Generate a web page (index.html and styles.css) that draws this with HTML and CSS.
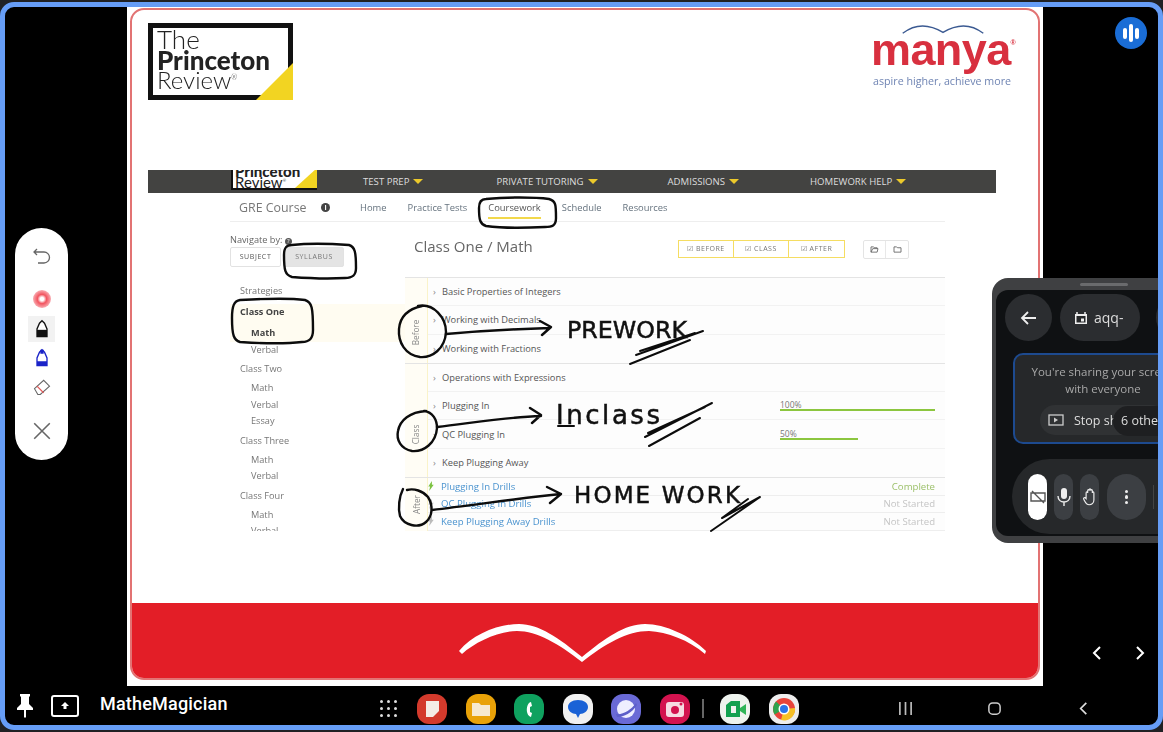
FILE: index.html
```html
<!DOCTYPE html>
<html lang="en">
<head>
  <meta charset="UTF-8">
  <title>MatheMagician</title>
  <link rel="stylesheet" href="styles.css">
</head>
<body>
  <div class="frame">
    <div class="main">
      <div class="slide">
        <div class="card">
          <div class="card-top">
            <div class="brand-row">
              <div class="tpr-logo">
                <span class="tpr-the">The</span>
                <b>Princeton</b>
                <span>Review<sup>®</sup></span>
              </div>
              <div class="manya-logo">
                <svg class="manya-wings" viewBox="0 0 96 14"><path d="M1 12C14 2 30 0 48 11C66 0 82 2 95 12" fill="none" stroke="#3b5a92" stroke-width="1.6"/></svg>
                <div class="manya-name">manya<sup>®</sup></div>
                <div class="manya-tag">aspire higher, achieve more</div>
              </div>
            </div>

            <div class="shot">
              <div class="topnav">
                <div class="mini-logo"><b>Princeton</b><span>Review<sup>®</sup></span></div>
                <a class="nav-a">TEST PREP</a>
                <a class="nav-b">PRIVATE TUTORING</a>
                <a class="nav-c">ADMISSIONS</a>
                <a class="nav-d">HOMEWORK HELP</a>
              </div>
              <div class="course">
                <div class="subnav">
                  <span class="course-name">GRE Course</span>
                  <span class="info">i</span>
                  <a>Home</a>
                  <a>Practice Tests</a>
                  <a class="current">Coursework</a>
                  <a>Schedule</a>
                  <a>Resources</a>
                </div>
                <div class="course-body">
                  <div class="side">
                    <div class="nav-by">Navigate by: <span class="help">?</span></div>
                    <div class="nav-btns">
                      <span class="btn-subject">SUBJECT</span>
                      <span class="btn-syllabus">SYLLABUS</span>
                    </div>
                    <ul class="syllabus">
                      <li class="head">Strategies</li>
                      <li class="head active">Class One</li>
                      <li class="sub active">Math</li>
                      <li class="sub">Verbal</li>
                      <li class="head">Class Two</li>
                      <li class="sub">Math</li>
                      <li class="sub">Verbal</li>
                      <li class="sub">Essay</li>
                      <li class="head">Class Three</li>
                      <li class="sub">Math</li>
                      <li class="sub">Verbal</li>
                      <li class="head">Class Four</li>
                      <li class="sub">Math</li>
                      <li class="sub">Verbal</li>
                    </ul>
                  </div>
                  <div class="content">
                    <div class="content-head">
                      <h2>Class One / Math</h2>
                      <div class="filters">
                        <span>☑ BEFORE</span>
                        <span>☑ CLASS</span>
                        <span>☑ AFTER</span>
                      </div>
                      <div class="folders">
                        <span><svg viewBox="0 0 10 8"><path d="M1 7V1h3l1 1h3v1M1 7h7l1-4H3z" fill="none" stroke="#666"/></svg></span>
                        <span><svg viewBox="0 0 10 8"><path d="M1 7V1h3l1 1h4v5z" fill="none" stroke="#666"/></svg></span>
                      </div>
                    </div>

                    <div class="section">
                      <div class="band band-before"><span>Before</span></div>
                      <div class="rows">
                        <div class="row"><i>›</i>Basic Properties of Integers</div>
                        <div class="row"><i>›</i>Working with Decimals</div>
                        <div class="row"><i>›</i>Working with Fractions</div>
                      </div>
                    </div>
                    <div class="section">
                      <div class="band band-class"><span>Class</span></div>
                      <div class="rows">
                        <div class="row"><i>›</i>Operations with Expressions</div>
                        <div class="row"><i>›</i>Plugging In
                          <div class="progress"><small>100%</small><div class="bar"><div class="fill" style="width:100%"></div></div></div>
                        </div>
                        <div class="row"><i>›</i>QC Plugging In
                          <div class="progress"><small>50%</small><div class="bar"><div class="fill" style="width:50%"></div></div></div>
                        </div>
                        <div class="row"><i>›</i>Keep Plugging Away</div>
                      </div>
                    </div>
                    <div class="section">
                      <div class="band"><span>After</span></div>
                      <div class="rows">
                        <div class="drill"><svg class="bolt" viewBox="0 0 6 11"><path d="M4 0L0 6h2L1 11l5-7H4z" fill="#7cc242"/></svg><a>Plugging In Drills</a><span class="status done">Complete</span></div>
                        <div class="drill"><svg class="bolt" viewBox="0 0 6 11"><path d="M4 0L0 6h2L1 11l5-7H4z" fill="#bbb"/></svg><a>QC Plugging In Drills</a><span class="status">Not Started</span></div>
                        <div class="drill"><svg class="bolt" viewBox="0 0 6 11"><path d="M4 0L0 6h2L1 11l5-7H4z" fill="#bbb"/></svg><a>Keep Plugging Away Drills</a><span class="status">Not Started</span></div>
                      </div>
                    </div>
                  </div>
                </div>
              </div>
            </div>
          </div>

          <div class="card-foot">
            <svg class="wings" viewBox="0 0 248 38"><path d="M0 27C14 10 40 0 60 0C80 0 100 14 123 33C146 14 166 0 186 0C206 0 232 12 247 27L246 30C230 16 208 8 190 7C168 7 146 20 123 38C100 20 78 7 58 7C40 7 16 18 3 30z" fill="#fff"/></svg>
          </div>
        </div>
      </div>

      <div class="gutter">
        <div class="voice-badge"><span></span><span class="tall"></span><span></span></div>
        <div class="pager">
          <svg viewBox="0 0 10 16"><path d="M8 2L2 8l6 6" fill="none" stroke="#fff" stroke-width="2"/></svg>
          <svg viewBox="0 0 10 16"><path d="M2 2l6 6-6 6" fill="none" stroke="#fff" stroke-width="2"/></svg>
        </div>
      </div>
    </div>

    <div class="taskbar">
      <svg class="pin" viewBox="0 0 16 24"><path d="M3 0h10v2l-1 1v7l4 4v2H9v7l-1 1-1-1v-7H0v-2l4-4V3L3 2z" fill="#fff"/></svg>
      <span class="share-icon"><svg viewBox="0 0 10 10"><path d="M5 1L1 5h2.500v3h3V5H9z" fill="#fff"/></svg></span>
      <span class="who">MatheMagician</span>

      <div class="dock">
        <div class="apps-grid"><i></i><i></i><i></i><i></i><i></i><i></i><i></i><i></i><i></i></div>
        <span class="app app-notes"><svg viewBox="0 0 30 30"><path d="M9 7h13v10l-6 6H9z" fill="#f4ede6"/></svg></span>
        <span class="app app-files"><svg viewBox="0 0 30 30"><path d="M6 9h7l2 2h9v11H6z" fill="#f6e9cf"/></svg></span>
        <span class="app app-phone"><svg viewBox="0 0 30 30"><path d="M17 8c-5 1-6 13 0 15l1-4-2-1v-5l2-1z" fill="#fff"/></svg></span>
        <span class="app app-msg"><svg viewBox="0 0 30 30"><path d="M15 6c6 0 10 3 10 7s-4 7-8 7l-2 4-2-4c-4 0-8-3-8-7s4-7 10-7z" fill="#1a62d6"/></svg></span>
        <span class="app app-net"><svg viewBox="0 0 30 30"><circle cx="15" cy="15" r="9" fill="#eef"/><path d="M5 20c7 1 15-4 20-11l1 2c-5 8-13 12-20 12z" fill="#5d5fc9"/></svg></span>
        <span class="app app-cam"><svg viewBox="0 0 30 30"><rect x="6" y="8" width="18" height="15" rx="3" fill="#f6dbe3"/><circle cx="15" cy="16" r="4" fill="#d3134f"/><circle cx="21" cy="10" r="1.500" fill="#d3134f"/></svg></span>
        <span class="dock-line"></span>
        <span class="app app-meet"><svg viewBox="0 0 30 30"><path d="M6 11l5-4h9v16H6z" fill="#12a150"/><path d="M20 14l6-4v11l-6-4z" fill="#2fb457"/><path d="M11 12h5v7h-5z" fill="#eef3ee"/></svg></span>
        <span class="app app-chrome"><svg viewBox="0 0 30 30"><circle cx="15" cy="15" r="11" fill="#e8443a"/><path d="M15 15L5.500 20.500A11 11 0 0 1 7 7.500z" fill="#2da44e"/><path d="M15 15l11-1a11 11 0 0 1-14 12z" fill="#f6c026"/><circle cx="15" cy="15" r="5.500" fill="#fff"/><circle cx="15" cy="15" r="4" fill="#2a74e8"/></svg></span>
      </div>

      <div class="android-nav">
        <svg viewBox="0 0 16 14"><path d="M2 0v14M8 0v14M14 0v14" stroke="#bbb" stroke-width="1.800"/></svg>
        <svg viewBox="0 0 16 16"><rect x="2" y="2" width="12" height="12" rx="4" fill="none" stroke="#ccc" stroke-width="1.600"/></svg>
        <svg viewBox="0 0 10 16"><path d="M8 2L2 8l6 6" fill="none" stroke="#ddd" stroke-width="1.800"/></svg>
      </div>
    </div>

    <!-- pen marks drawn on top of the slide, in page coordinates -->
    <svg class="ink" viewBox="5 7 1153 718">
      <g fill="none" stroke="#0c0c0c" stroke-width="2.400" stroke-linecap="round" stroke-linejoin="round">
        <path d="M486 199C505 197 535 197 549 199C556 201 556 205 556 218C556 226 552 227 545 227C525 228 500 228 486 226C480 224 479 220 479 208C479 202 481 199 486 199z"/>
        <path d="M292 245C310 243 335 244 349 245C355 247 356 252 356 268C356 276 352 278 345 278C328 279 305 278 292 277C285 275 284 270 284 255C284 248 286 245 292 245z"/>
        <path d="M240 300C258 299 290 298 305 300C312 302 313 308 313 330C313 339 309 342 302 342C285 344 255 343 240 342C234 340 232 336 232 318C232 306 234 301 240 300z"/>
        <path d="M418 306C434 303 446 318 446 332C445 349 432 358 420 357C405 355 398 342 399 329C400 316 408 309 422 306"/>
        <path d="M446 334C480 331 515 329 550 328M540 321L551 327L542 335"/>
        <path d="M424 411C433 412 437 420 437 428C436 443 424 452 412 451C401 449 396 440 398 431C400 420 410 412 426 411"/>
        <path d="M437 427C472 423 506 417 541 416M530 408L541 415L532 423"/>
        <path d="M403 489C399 497 398 508 400 516C404 525 418 529 426 522C433 516 433 505 428 497C423 491 414 488 407 490"/>
        <path d="M432 510C475 505 520 498 561 494M547 487L561 494L550 503"/>
        <path d="M636 355L703 331M630 364L690 340M640 351L695 333" stroke-width="2"/>
        <path d="M645 437L712 403M649 446L700 418M648 433L705 407" stroke-width="2"/>
        <path d="M711 531L760 497L722 518L748 499" stroke-width="2"/>
        <path d="M558 426H574" stroke-width="2"/>
      </g>
      <g class="hand">
        <text x="567" y="338" textLength="120" lengthAdjust="spacingAndGlyphs" font-size="23">PREWORK</text>
        <text x="556" y="424" textLength="104" lengthAdjust="spacing" font-size="26">Inclass</text>
        <text x="574" y="503" textLength="166" lengthAdjust="spacing" font-size="23">HOME WORK</text>
      </g>
    </svg>

    <!-- floating annotation tools -->
    <div class="tools">
      <svg class="tool" viewBox="0 0 20 20"><path d="M5 2L2 5l3 3M2 5h10a5 5 0 0 1 0 11H6" fill="none" stroke="#666" stroke-width="1.300"/></svg>
      <span class="laser"></span>
      <span class="tool-on">
        <svg class="tool" viewBox="0 0 20 24"><path d="M10 2l3 3 3 7v9H4v-9l3-7z" fill="#fff" stroke="#111" stroke-width="1.600"/><path d="M4 13h12v8H4z" fill="#111"/></svg>
      </span>
      <svg class="tool tool-blue" viewBox="0 0 20 24"><path d="M10 2l3 3 3 7v9H4v-9l3-7z" fill="#fff" stroke="#1a23c8" stroke-width="1.600"/><path d="M8 2h4v5H8zM4 16h12v5H4z" fill="#1a23c8"/></svg>
      <svg class="tool eraser" viewBox="0 0 24 24"><path d="M3 14L14 4l7 7-11 10H7z" fill="none" stroke="#666" stroke-width="1.300"/><path d="M6 11l8 8" stroke="#e25555" stroke-width="1.500"/></svg>
      <svg class="tool tool-close" viewBox="0 0 18 18"><path d="M2 2l14 14M16 2L2 16" stroke="#666" stroke-width="1.400"/></svg>
    </div>

    <!-- meeting panel, runs off the right edge -->
    <div class="meet-panel">
      <div class="meet-inner">
        <div class="meet-top">
          <span class="round-btn"><svg viewBox="0 0 18 18"><path d="M8 3L2 9l6 6M2 9h14" fill="none" stroke="#eee" stroke-width="1.800"/></svg></span>
          <span class="code-pill"><svg viewBox="0 0 14 14"><path d="M1 3h12v10H1z" fill="#eee"/><path d="M3 1v2M11 1v2" stroke="#eee" stroke-width="1.500"/><rect x="2.500" y="5" width="9" height="6.500" fill="#26282a"/><rect x="7" y="7.500" width="3" height="3" fill="#eee"/></svg>aqq-</span>
          <span class="round-btn"></span>
        </div>
        <div class="share-box">
          <p>You're sharing your screen<br>with everyone</p>
          <div class="stop-pill"><svg viewBox="0 0 16 12"><rect x="1" y="1" width="14" height="10" fill="none" stroke="#ccc" stroke-width="1.300"/><path d="M6 3.500L10 6 6 8.500z" fill="#ccc"/></svg>Stop sharing</div>
          <div class="others">6 others</div>
        </div>
        <div class="controls">
          <span class="ctl ctl-cam"><svg viewBox="0 0 16 16"><path d="M1 4h14v8H1zM2 2l12 12" fill="none" stroke="#555" stroke-width="1.400"/></svg></span>
          <span class="ctl"><svg viewBox="0 0 14 20"><rect x="4" y="1" width="6" height="11" rx="3" fill="#eee"/><path d="M1 9c0 8 12 8 12 0M7 15v4" fill="none" stroke="#eee" stroke-width="1.400"/></svg></span>
          <span class="ctl"><svg viewBox="0 0 18 22"><path d="M4 10V6c0-2 2-2 2 0V3c0-2 2-2 2 0v-1c0-2 2-2 2 0v1c0-2 2-2 2 0v3c0-2 2-2 2 0v9c0 4-3 6-6 6-4 0-5-3-7-7-1-2 1-3 3-1z" fill="none" stroke="#eee" stroke-width="1.500"/></svg></span>
          <span class="ctl ctl-menu"><i></i><i></i><i></i></span>
          <span class="ctl-line"></span>
        </div>
      </div>
    </div>
  </div>
</body>
</html>
```

FILE: styles.css
```css
/* General Reset */
* {
  margin: 0;
  padding: 0;
  box-sizing: border-box;
}

body {
  background-color: #202124;
  padding-top: 2px;
  height: 732px;
  overflow: hidden;
  font-family: 'Open Sans', 'Liberation Sans', sans-serif;
}

ul {
  list-style: none;
}

/* Blue presenter frame */
.frame {
  position: relative;
  width: 1163px;
  height: 728px;
  border: 5px solid #669df6;
  border-radius: 14px;
  background-color: #000;
  overflow: hidden;
  display: flex;
  flex-direction: column;
}

.main {
  display: flex;
  height: 679px;
}

/* Slide */
.slide {
  width: 916px;
  margin-left: 122px;
  background-color: #fff;
  padding: 1px 3px 6px;
}

.card {
  height: 672px;
  border: 2px solid #e27373;
  border-radius: 14px;
  overflow: hidden;
  display: flex;
  flex-direction: column;
}

.card-top {
  flex: 1;
  padding: 13px 0 0 16px;
}

.card-foot {
  height: 75px;
  background-color: #e31e27;
  display: flex;
  justify-content: center;
  padding-top: 21px;
}

.wings {
  width: 248px;
  height: 38px;
  margin-left: -4px;
}

.brand-row {
  display: flex;
  justify-content: space-between;
  height: 77px;
  padding-right: 21px;
  filter: blur(0.4px);
}

/* Princeton logo */
.tpr-logo {
  position: relative;
  width: 145px;
  height: 77px;
  border: 5px solid #111;
  padding: 1px 0 0 4px;
  color: #222;
  font-family: 'Lato', 'Liberation Sans', sans-serif;
  font-weight: 300;
  font-size: 24px;
  line-height: 20.5px;
  display: flex;
  flex-direction: column;
}

.tpr-logo::after {
  content: "";
  position: absolute;
  right: -5px;
  bottom: -5px;
  width: 37px;
  height: 37px;
  background-color: #f2d422;
  clip-path: polygon(100% 0, 100% 100%, 0 100%);
}

.tpr-the {
  font-size: 26px;
}

.tpr-logo b {
  font-weight: 900;
  font-size: 26px;
}

.tpr-logo sup {
  font-size: 7px;
  line-height: 0;
}

/* Manya logo */
.manya-logo {
  width: 144px;
  text-align: center;
}

.manya-wings {
  display: block;
  width: 96px;
  height: 12px;
  margin-left: 22px;
}

.manya-name {
  color: #d8303f;
  font-family: 'Liberation Sans', sans-serif;
  font-weight: 700;
  font-size: 45px;
  line-height: 30px;
  letter-spacing: -0.6px;
  white-space: nowrap;
  text-align: left;
  margin-left: -2px;
}

.manya-name sup {
  font-size: 7px;
  vertical-align: 20px;
  line-height: 0;
}

.manya-tag {
  color: #6f84b3;
  font-size: 10.7px;
  line-height: 14px;
  white-space: nowrap;
  margin-top: 9px;
  padding-right: 6px;
}

/* Embedded course screenshot */
.shot {
  width: 848px;
  margin-top: 70px;
  filter: blur(0.6px);
}

.topnav {
  position: relative;
  height: 23px;
  background-color: #434341;
  color: #ddd;
  font-size: 9.6px;
  display: flex;
  align-items: center;
  padding-left: 83px;
}

.topnav a {
  display: flex;
  align-items: center;
  white-space: nowrap;
}

.topnav a::after {
  content: "";
  margin-left: 4px;
  border-left: 5px solid transparent;
  border-right: 5px solid transparent;
  border-top: 5px solid #ecc92b;
}

.nav-a { margin-left: 46px; }
.nav-b { margin-left: 73px; }
.nav-c { margin-left: 70px; }
.nav-d { margin-left: 71px; }

.mini-logo {
  position: relative;
  align-self: flex-start;
  width: 86px;
  height: 20px;
  overflow: hidden;
  background-color: #fff;
  border-left: 2px solid #111;
  border-bottom: 2px solid #111;
  padding-left: 2px;
  color: #222;
  font-family: 'Lato', 'Liberation Sans', sans-serif;
  font-size: 15px;
  line-height: 11px;
  display: flex;
  flex-direction: column;
  justify-content: flex-end;
}

.mini-logo::after {
  content: "";
  position: absolute;
  right: 0;
  bottom: 0;
  width: 22px;
  height: 20px;
  background-color: #f2d422;
  clip-path: polygon(100% 0, 100% 100%, 0 100%);
}

.mini-logo b {
  font-weight: 900;
}

.mini-logo sup {
  font-size: 4px;
  line-height: 0;
}

.course {
  width: 715px;
  margin-left: 82px;
}

.subnav {
  height: 29px;
  border-bottom: 1px solid #eee;
  display: flex;
  align-items: center;
  padding-left: 9px;
  font-size: 9.4px;
  color: #66737f;
}

.subnav a {
  margin-right: 21px;
  white-space: nowrap;
}

.course-name {
  font-size: 12.4px;
  color: #777;
  white-space: nowrap;
  width: 81px;
}

.info {
  width: 9px;
  height: 9px;
  margin-left: 1px;
  margin-right: 30px;
  border-radius: 50%;
  background-color: #444;
  color: #fff;
  font-size: 7px;
  font-weight: 700;
  line-height: 9px;
  text-align: center;
}

.subnav .current {
  position: relative;
  color: #555;
}

.subnav .current::after {
  content: "";
  position: absolute;
  left: 0;
  right: 0;
  bottom: -5px;
  height: 2px;
  background-color: #f2d84b;
}

.course-body {
  display: flex;
  height: 309px;
  overflow: hidden;
}

/* Syllabus column */
.side {
  width: 175px;
  padding-top: 11px;
  color: #777;
  font-size: 9.2px;
}

.nav-by {
  height: 13px;
  line-height: 13px;
  color: #666;
}

.help {
  display: inline-block;
  width: 7px;
  height: 7px;
  border-radius: 50%;
  background-color: #555;
  color: #fff;
  font-size: 6px;
  line-height: 7px;
  text-align: center;
}

.nav-btns {
  display: flex;
  gap: 3px;
  margin-top: 1px;
  font-size: 7px;
  letter-spacing: 0.6px;
  color: #555;
}

.nav-btns span {
  height: 20px;
  line-height: 18px;
  text-align: center;
  border: 1px solid #e2e2e2;
  border-radius: 2px;
}

.btn-subject {
  width: 51px;
}

.btn-syllabus {
  width: 60px;
  background-color: #e4e4e4;
  color: #777;
}

.syllabus {
  margin-top: 15.5px;
}

.syllabus li {
  height: 16.5px;
  line-height: 16.5px;
  padding-left: 10px;
}

.syllabus .head {
  margin-top: 3px;
  margin-bottom: 2.5px;
}

.syllabus .sub {
  padding-left: 21px;
}

.syllabus .active {
  color: #444;
  font-weight: 700;
  background-color: #fffcf1;
}

.syllabus .head.active {
  margin-top: 5px;
  margin-bottom: 0;
  height: 21px;
}

/* Lesson column */
.content {
  width: 540px;
  font-size: 9.3px;
  color: #555;
}

.content-head {
  height: 56px;
  border-bottom: 1px solid #e4e4e4;
  display: flex;
  padding: 18px 36px 0 9px;
}

.content-head h2 {
  font-size: 15px;
  line-height: 15px;
  font-weight: 400;
  color: #666;
  white-space: nowrap;
  width: 266px;
  margin-top: -1px;
}

.filters {
  display: flex;
  height: 18px;
  border: 1px solid #f5dd62;
  font-size: 7px;
  letter-spacing: 0.5px;
  color: #777;
}

.filters span {
  width: 55px;
  line-height: 16px;
  text-align: center;
  white-space: nowrap;
  border-right: 1px solid #f5dd62;
}

.filters span:last-child {
  border-right: 0;
}

.folders {
  display: flex;
  margin-left: 18px;
  height: 19px;
  border: 1px solid #e4e4e4;
  border-radius: 2px;
}

.folders span {
  width: 22px;
  display: flex;
  align-items: center;
  justify-content: center;
  border-right: 1px solid #e8e8e8;
}

.folders span:last-child {
  border-right: 0;
}

.folders svg {
  width: 9px;
  height: 7px;
}

.section {
  display: flex;
  border-bottom: 1px solid #e4e4e4;
}

.band {
  width: 23px;
  background-color: #fffdf5;
  border-right: 1px solid #faf3c9;
  display: flex;
  align-items: center;
  justify-content: center;
  color: #888;
  font-size: 8.2px;
}

.band span {
  transform: rotate(-90deg);
  white-space: nowrap;
}

.band-before {
  padding-top: 24px;
}

.band-class {
  padding-top: 28px;
}

.rows {
  flex: 1;
  background-color: #fdfdfd;
}

.row {
  height: 28.3px;
  display: flex;
  align-items: center;
  padding: 0 10px 0 5px;
  border-bottom: 1px solid #f2f2f2;
  white-space: nowrap;
}

.rows .row:last-child {
  border-bottom: 0;
}

.row i {
  width: 9px;
  font-style: normal;
  color: #888;
}

.progress {
  margin-left: auto;
  width: 155px;
  color: #777;
}

.progress small {
  display: block;
  font-size: 8.5px;
  line-height: 9px;
}

.bar {
  height: 2px;
}

.fill {
  height: 100%;
  background-color: #8cc63f;
}

.drill {
  height: 17.5px;
  display: flex;
  align-items: center;
  padding: 0 10px 0 0;
  border-bottom: 1px solid #eee;
  white-space: nowrap;
  font-size: 9.6px;
}

.drill a {
  color: #4a93cf;
}

.bolt {
  width: 6px;
  height: 10px;
  margin: 0 7px 0 0;
}

.status {
  margin-left: auto;
  color: #c4c4c4;
}

.status.done {
  color: #9cc06a;
}

/* Right gutter */
.gutter {
  flex: 1;
  display: flex;
  flex-direction: column;
}

.voice-badge {
  align-self: flex-end;
  width: 32px;
  height: 32px;
  margin: 10px 11px 0 0;
  border-radius: 50%;
  background-color: #1a6dd6;
  display: flex;
  align-items: center;
  justify-content: center;
  gap: 2px;
}

.voice-badge span {
  width: 4px;
  height: 11px;
  border-radius: 2px;
  background-color: #fff;
}

.voice-badge .tall {
  height: 18px;
}

.pager {
  margin-top: auto;
  margin-bottom: 25px;
  padding-left: 49px;
  display: flex;
  gap: 33px;
}

.pager svg {
  width: 10px;
  height: 16px;
}

/* Bottom bar */
.taskbar {
  flex: 1;
  display: flex;
  align-items: center;
  padding-left: 12px;
  color: #fff;
}

.pin {
  width: 16px;
  height: 24px;
}

.share-icon {
  width: 28px;
  height: 22px;
  margin-left: 18px;
  border: 2px solid #fff;
  border-radius: 3px;
  display: flex;
  align-items: center;
  justify-content: center;
}

.share-icon svg {
  width: 10px;
  height: 10px;
}

.who {
  width: 128px;
  margin: 0 0 4px 21px;
  font-family: 'Roboto', 'Liberation Sans', sans-serif;
  font-weight: 500;
  font-size: 18px;
  letter-spacing: 0.2px;
  white-space: nowrap;
}

.dock {
  display: flex;
  align-items: center;
  margin: 6px 0 0 152px;
  filter: blur(0.5px);
}

.apps-grid {
  width: 17px;
  display: grid;
  grid-template-columns: repeat(3, 3px);
  gap: 4px;
  margin-right: 20px;
}

.apps-grid i {
  height: 3px;
  border-radius: 50%;
  background-color: #ddd;
}

.app {
  width: 30px;
  height: 30px;
  margin-right: 18.5px;
  border-radius: 12px;
  overflow: hidden;
}

.app svg {
  display: block;
  width: 30px;
  height: 30px;
}

.app-notes { background-color: #d33a2c; }
.app-files { background-color: #e9a208; }
.app-phone { background-color: #0fa15f; }
.app-msg { background-color: #f1f1f1; }
.app-net { background-color: #6a6ad6; }
.app-cam { background-color: #d3134f; }
.app-meet { background-color: #eef3ee; }
.app-chrome { background-color: #eee; }

.dock-line {
  width: 2px;
  height: 19px;
  margin: 0 16px 0 -6px;
  background-color: #666;
}

.android-nav {
  display: flex;
  align-items: center;
  margin: 6px 0 0 81px;
}

.android-nav svg {
  height: 15px;
  width: 15px;
}

.android-nav svg:nth-child(1) {
  margin-right: 74px;
}

.android-nav svg:nth-child(2) {
  margin-right: 74px;
}

/* Pen marks */
.ink {
  position: absolute;
  left: 0;
  top: 0;
  width: 1153px;
  height: 718px;
  pointer-events: none;
  filter: blur(0.3px);
}

.hand text {
  font-family: 'DejaVu Sans', sans-serif;
  fill: #111;
  stroke: #111;
  stroke-width: 0.5;
}

/* Annotation tools */
.tools {
  position: absolute;
  left: 10px;
  top: 221px;
  width: 53px;
  height: 232px;
  border-radius: 27px;
  background-color: #fff;
  display: flex;
  flex-direction: column;
  align-items: center;
  padding-top: 19px;
  filter: blur(0.3px);
}

.tool {
  display: block;
  width: 20px;
  height: 20px;
}

.laser {
  width: 18px;
  height: 18px;
  margin-top: 23px;
  border-radius: 50%;
  background: radial-gradient(circle, #fff 0 14%, #f2545f 36%, #f8a6ac 68%, #fff 100%);
}

.tool-on {
  width: 27px;
  height: 26px;
  margin-top: 8px;
  background-color: #f2f2f2;
  display: flex;
  align-items: center;
  justify-content: center;
}

.tool-blue {
  margin-top: 6px;
}

.eraser {
  margin-top: 9px;
}

.tool-close {
  margin-top: 24px;
}

/* Meeting panel */
.meet-panel {
  position: absolute;
  left: 987px;
  top: 271px;
  width: 220px;
  height: 265px;
  padding: 12px 0 7px 4px;
  border-radius: 16px;
  background-color: #3f4042;
  filter: blur(0.4px);
}

.meet-panel::before {
  content: "";
  position: absolute;
  left: 88px;
  top: 5px;
  width: 48px;
  height: 3px;
  border-radius: 2px;
  background-color: #6a6b6d;
}

.meet-inner {
  height: 100%;
  padding: 4px 0 0 9px;
  border-radius: 12px;
  background-color: #0f1113;
}

.meet-top {
  display: flex;
  gap: 8px;
}

.round-btn {
  flex: none;
  width: 47px;
  height: 47px;
  border-radius: 50%;
  background-color: #2b2d30;
  display: flex;
  align-items: center;
  justify-content: center;
}

.round-btn svg {
  width: 18px;
  height: 18px;
}

.code-pill {
  flex: none;
  width: 80px;
  height: 47px;
  margin-right: 8px;
  border-radius: 24px;
  background-color: #2b2d30;
  color: #ddd;
  font-size: 14px;
  display: flex;
  align-items: center;
  padding-left: 14px;
  gap: 6px;
}

.code-pill svg {
  width: 14px;
  height: 14px;
}

.share-box {
  position: relative;
  width: 180px;
  height: 91px;
  margin: 12px 0 0 8px;
  padding-top: 8px;
  border: 2px solid #1d4a8f;
  border-radius: 10px;
  background-color: #26282a;
  color: #a8a8a8;
  font-size: 11.5px;
  line-height: 17px;
  text-align: center;
}

.share-box p {
  white-space: nowrap;
}

.stop-pill {
  position: absolute;
  left: 25px;
  top: 50px;
  width: 126px;
  height: 30px;
  border-radius: 15px;
  background-color: #303234;
  color: #ddd;
  font-size: 12.5px;
  display: flex;
  align-items: center;
  padding-left: 8px;
  gap: 10px;
  white-space: nowrap;
}

.stop-pill svg {
  width: 16px;
  height: 12px;
}

.others {
  position: absolute;
  left: 98px;
  top: 51px;
  width: 70px;
  height: 30px;
  padding-left: 8px;
  border-radius: 15px;
  background-color: #1e1f21;
  color: #ddd;
  font-size: 12.5px;
  line-height: 30px;
  text-align: left;
  white-space: nowrap;
}

.controls {
  width: 190px;
  height: 75px;
  margin: 15px 0 0 7px;
  padding: 15px 16px;
  border-radius: 38px;
  background-color: #26282a;
  display: flex;
  gap: 7px;
}

.ctl {
  width: 19px;
  height: 46px;
  border-radius: 10px;
  background-color: #3c3f43;
  display: flex;
  align-items: center;
  justify-content: center;
}

.ctl svg {
  width: 14px;
  height: 20px;
}

.ctl-cam {
  background-color: #fff;
}

.ctl-cam svg {
  width: 16px;
  height: 16px;
}

.ctl-menu {
  width: 39px;
  margin-left: 1px;
  border-radius: 20px;
  flex-direction: column;
  gap: 2px;
}

.ctl-menu i {
  width: 3.500px;
  height: 3.500px;
  border-radius: 50%;
  background-color: #eee;
}

.ctl-line {
  width: 1px;
  height: 24px;
  margin-top: 11px;
  background-color: #444;
}
```
